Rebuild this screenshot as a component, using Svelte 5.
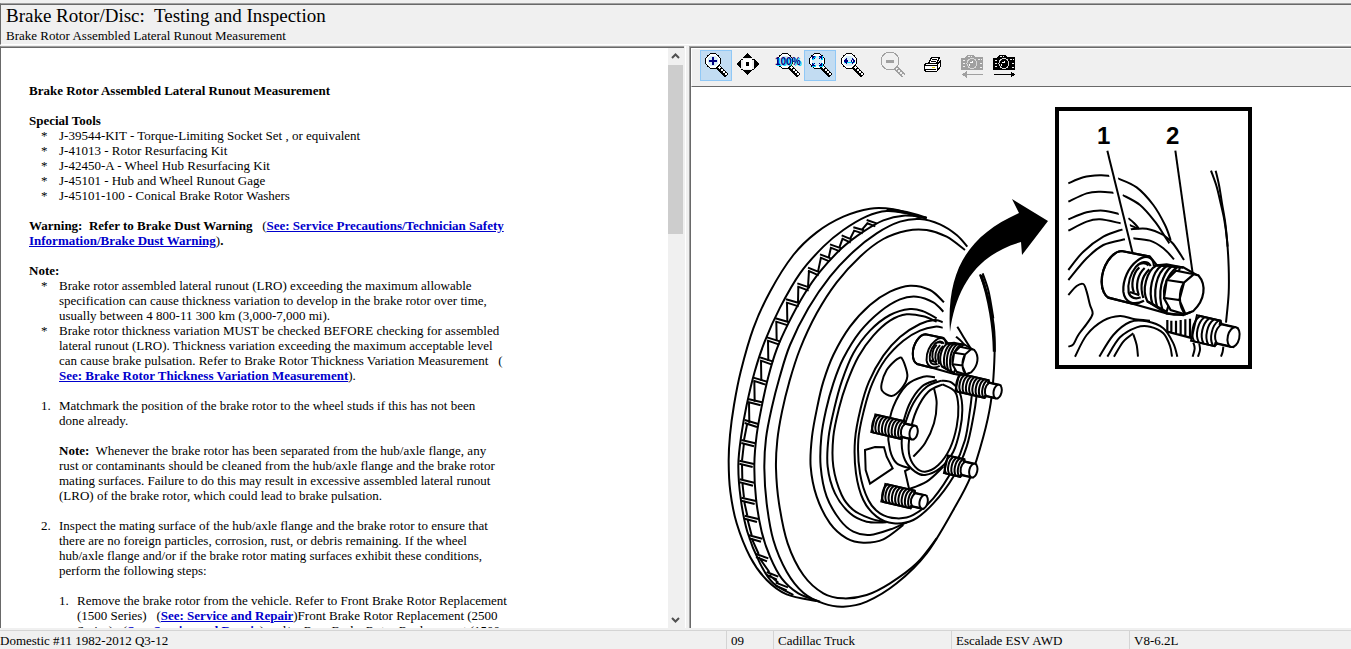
<script>
  let mode = $state('fit');

  const tools = ['J-39544-KIT - Torque-Limiting Socket Set , or equivalent', 'J-41013 - Rotor Resurfacing Kit', 'J-42450-A - Wheel Hub Resurfacing Kit', 'J-45101 - Hub and Wheel Runout Gage', 'J-45101-100 - Conical Brake Rotor Washers'];

  const toolbar = [
    [{ id: 'in', label: 'Zoom in', on: true }, { id: 'pan', label: 'Pan' }],
    [{ id: 'full', label: 'Actual size' }, { id: 'fit', label: 'Fit in window' }, { id: 'width', label: 'Fit width' }],
    [{ id: 'out', label: 'Zoom out', off: true }],
    [{ id: 'print', label: 'Print' }],
    [{ id: 'prev', label: 'Previous image', off: true }, { id: 'next', label: 'Next image' }]
  ];

  // smooth line through a flat list of x y pairs
  const curve = (str) => {
    const n = str.trim().split(/[\s,]+/).map(Number);
    const p = [];
    for (let i = 0; i < n.length; i += 2) p.push([n[i], n[i + 1]]);
    let d = `M${p[0]}`;
    for (let i = 0; i < p.length - 1; i++) {
      const a = p[i - 1] || p[i], b = p[i], c = p[i + 1], e = p[i + 2] || c;
      d += `C${b[0] + (c[0] - a[0]) / 6},${b[1] + (c[1] - a[1]) / 6} ${c[0] - (e[0] - b[0]) / 6},${c[1] - (e[1] - b[1]) / 6} ${c}`;
    }
    return d;
  };

  const disc = [
    // rim edges
    '600,65 520,43 450,41 370,65 290,112 220,180 150,290 100,400 62,530 42,630 30,720 26,800 31,890 50,985 90,1085 140,1155 200,1198 290,1218',
    '600,68 560,55 500,48 440,64 370,105 310,155 240,235 180,338 134,440 104,530 80,630 64,720 55,810 62,910 82,1010 120,1105 160,1165 220,1200',
    '620,68 550,62 490,76 430,110 365,160 300,230 250,302 205,385 170,463 145,545 125,635 110,720 103,810 108,910 125,1010 150,1085 185,1150 235,1195 300,1220',
    '742,155 710,120 660,88 600,72 540,80 470,115 400,170 330,245 265,340 210,450 178,550 155,640 138,730 133,820 140,925 160,1035 200,1130 250,1193 310,1225 370,1235 440,1220 530,1165 620,1075 700,945 752,845 790,725 812,625 822,520 823,410 808,320 780,238',
    '735,165 680,125 620,105 560,107 490,132 420,185 350,262 290,355 240,462 208,560 186,650 172,735 168,820 177,925 203,1045 250,1140 310,1195 370,1210 440,1200 510,1165 590,1105 650,1030',
    '788,235 806,290 820,370',
    // hat steps
    '672,322 630,285 570,272 510,290 450,330 390,395 340,480 310,560 292,635 276,725 272,815 290,905 330,985 380,1030 430,1043 490,1033 550,990',
    '670,350 640,322 590,305 540,313 480,350 420,410 370,490 340,565 318,645 304,725 302,815 320,905 360,975 400,1010 450,1020 520,1000 560,982',
    '650,370 610,349 570,342 510,360 450,407 400,475 365,560 343,640 326,725 323,815 345,895 390,955 440,980 500,982',
    '650,380 610,364 560,358 510,377 460,422 415,485 380,565 357,640 340,725 340,815 365,900 400,945 450,970 490,980',
    // flange
    '668,382 645,375 600,387 540,426 490,482 447,560 422,640 405,735 408,835 430,915 470,965 520,985 580,975 640,925 700,845 740,755 762,655 770,600',
    '668,398 645,395 600,407 550,437 497,492 457,565 432,645 415,735 420,835 445,915 480,955 530,970 580,960 640,910 700,820 735,735 750,645 756,595',
    '712,395 730,425 752,460',
    '708,425 725,440 740,458',
    // centre bore
    '645,547 610,545 560,570 520,635 505,705 510,765 530,805 570,820',
    '665,557 620,575 580,625 553,695 545,745 555,795 585,830 615,840 660,820 700,770 720,705 727,645 720,595 695,563 665,557',
    '650,555 605,575 567,630 542,710',
    '668,568 625,590 590,645 570,715 567,775 585,815 615,830 655,810 690,760 710,695 715,635 705,590 668,568',
    '642,580 650,625 642,685 615,745 580,785',
    // windows
    '543,486 553,505 562,545 545,580 515,603 487,588 485,565 500,525 525,497 543,486',
    '560,885 620,860 670,815'
  ];

  const fins = [
    [440, 75, 470, 85], [400, 97, 432, 106], [365, 121, 396, 134], [330, 148, 364, 160], [300, 178, 332, 190],
    [264, 218, 300, 232], [232, 265, 270, 278], [198, 313, 240, 325], [166, 370, 208, 382], [141, 427, 182, 440],
    [120, 487, 160, 500], [100, 548, 141, 560], [84, 612, 126, 622], [74, 675, 115, 687], [64, 735, 106, 745],
    [58, 797, 102, 807], [59, 853, 103, 863], [64, 908, 108, 918], [74, 962, 115, 972], [87, 1021, 127, 1031],
    [108, 1077, 145, 1090], [140, 1131, 175, 1145], [167, 1163, 204, 1177]
  ];

  const finPath = (f, i) => {
    const [x, y, r, s] = f;
    const next = fins[i + 1];
    let d = `M${x} ${y}L${r} ${s}M${x} ${y + 9}L${r - 4} ${s + 9}`;
    if (next) d += i < 13 ? `M${x + 3} ${y + 9}L${Math.min(next[2] - 6, x + 4)} ${next[3] - 2}` : `M${x + 8} ${y + 9}L${next[0] + 8} ${next[1]}`;
    return d;
  };

  const inset = [
    '55,250 100,232 150,226 180,228',
    '203,235 260,262 310,315 345,375 362,420',
    '55,305 110,280 150,275 192,278',
    '218,285 270,315 315,365 345,410 358,430',
    '55,358 110,337 160,332 208,342',
    '55,392 110,365 150,358 212,370',
    '235,355 250,367 265,385 238,375',
    '240,388 290,386 340,405 370,432 402,480',
    '55,510 100,455 160,410 218,388',
    '55,540 110,475 160,435 225,418',
    '250,415 300,422 340,445 372,478',
    '55,585 80,558 100,552 110,575 120,615 128,640 115,665 85,705 70,733 55,740',
    '75,770 110,705 160,662 210,648 255,658 300,662',
    '148,770 190,705 240,666 290,664 340,685 370,730 382,770',
    '172,770 210,712 260,682 300,680 340,700 360,738 366,770',
    '192,770 220,725 250,700',
    '250,703 260,735 264,770',
    '483,212 500,260 512,310 523,360 531,420 536,500 536,580 528,668',
    '497,212 507,255 516,310 526,370 533,440',
    '430,728 434,745 428,770',
    '448,732 450,750 444,770',
    '520,740 518,755 513,770'
  ];
</script>

<svelte:head>
  <title>Brake Rotor/Disc: Testing and Inspection</title>
</svelte:head>

{#snippet stud(x, y, scale, count)}
  <g transform="translate({x} {y}) rotate(13) scale({scale})">
    <path class="white" d="M0 -27H{count * 10}V-20H{count * 10 + 38}V20H{count * 10}V27H0Z" stroke="none" />
    {#each Array(count) as _, i}
      <path d="M{i * 10 + 6} -26C{i * 10 - 5} -14 {i * 10 - 5} 14 {i * 10 + 6} 26" />
    {/each}
    <path d="M4 -27H{count * 10}L{count * 10 + 4} -21H{count * 10 + 34}M4 27H{count * 10}L{count * 10 + 4} 21H{count * 10 + 34}M{count * 10 + 4} -21C{count * 10 - 7} -8 {count * 10 - 7} 10 {count * 10 + 4} 21" />
    <ellipse class="white" cx={count * 10 + 34} cy="0" rx="12" ry="21" />
  </g>
{/snippet}

{#snippet bolt()}
  <path class="white" d="M300 80L215 63C185 65 155 110 155 155C155 180 165 198 175 203L250 222L350 250L400 255L455 180L440 135L400 112L320 105Z" stroke="none" />
  <path d="M300 80L215 63C185 65 155 110 155 155C155 180 165 198 175 203L250 222" />
  <path d="M312 108C310 78 285 73 262 92C235 112 218 150 220 185C224 216 250 229 282 212" />
  <path d="M302 108C292 90 272 95 258 110C242 130 232 160 236 188C241 205 258 208 272 202M240 186L268 196M262 105C275 98 288 99 296 106" />
  <path d="M268 112C248 130 242 165 252 188M284 114C262 134 256 168 266 194M298 118C274 140 270 172 280 204" />
  <path class="white" d="M320 106C290 122 274 180 292 214L350 245L390 112Z" />
  <path d="M335 107C306 126 294 184 308 224M350 108C318 130 308 186 322 233M366 108C334 132 322 190 338 242M382 111C350 134 336 180 345 203M320 106L350 103L400 113" />
  <path class="white" d="M350 150L378 122L428 132L445 136C470 165 465 210 430 243L405 253L362 240L342 205Z" />
  <path d="M350 150L402 158L430 134M402 158L388 210L344 204M388 210L406 252L425 245M292 214L350 250L372 254L405 253M402 158C385 185 385 230 406 252" />
{/snippet}

{#snippet glass()}
  <path d="M18 17l9 9" stroke="#000" stroke-width="5" />
  <path d="M19 17l8 8" stroke="#fff" stroke-width="2" stroke-dasharray="2 1" />
  <circle cx="13" cy="11" r="7.500" fill="#fff" stroke="#000" />
  <circle cx="13" cy="11" r="5.500" fill="#d4ecf8" />
{/snippet}

{#snippet camera(color)}
  <path d="M5 8h4l2-3h6l2 2h8v13H5z" fill={color} stroke="none" />
  <path d="M12 6h4M7 10h2M7 13h2M7 16h2M22 9h4M24 13h2M24 17h2" stroke="#f0f0f0" stroke-dasharray="2 1" />
  <circle cx="16" cy="13.500" r="5" stroke="#d8d8d8" />
  <path d="M14 12h2v-1M13 14v2" stroke="#fff" />
{/snippet}

{#snippet icon(id)}
  <svg class="icon" viewBox="0 0 32 31" fill="none" aria-hidden="true">
    {#if id === 'in'}
      {@render glass()}
      <path d="M9 11h8M13 7v8" stroke="#000080" stroke-width="2" />
    {:else if id === 'pan'}
      <path d="M15.500 3l5 5h-10zM15.500 25l5-5h-10zM4 14l5-5v10zM27 14l-5-5v10z" fill="#000" />
      <path d="M9 9h2M20 9h2M9 19h2M20 19h2" stroke="#000" />
      <rect x="11" y="9" width="9" height="10" fill="#fff" />
      <circle cx="15.500" cy="14" r="2" fill="#000" />
    {:else if id === 'full'}
      {@render glass()}
      <text x="4" y="16" fill="#00e0ff">100%</text>
      <text x="3" y="15" fill="#000080">100%</text>
    {:else if id === 'fit'}
      {@render glass()}
      <path d="M9 10V7h3M15 7h3v3M18 13v3h-3M12 16H9v-3" stroke="#00d8ff" stroke-width="2" />
      <path d="M8.500 9V6.500H11M15 6.500h2.500V9M17.500 13v2.500H15M11 15.500H8.500V13M9 7l2 2M17 7l-2 2M17 15l-2-2M9 15l2-2" stroke="#000080" />
    {:else if id === 'width'}
      {@render glass()}
      <path d="M8 12.500h11" stroke="#00d8ff" />
      <path d="M7 11l4-3v6zM20 11l-4-3v6zM10 10h2v2h-2zM15 10h2v2h-2z" fill="#000080" />
    {:else if id === 'out'}
      <path d="M19 17l9 9" stroke="#a0a0a0" stroke-width="5" />
      <path d="M20 18l8 8" stroke="#f0f0f0" stroke-width="2" stroke-dasharray="2 1" />
      <circle cx="14" cy="11" r="9" fill="#f0f0f0" stroke="#a0a0a0" />
      <path d="M10 11h8" stroke="#a0a0a0" stroke-width="3" />
    {:else if id === 'print'}
      <path d="M12.500 13.500l3-6h8l-3 6M9.500 13.500h12l3-3v6l-4 5h-11l-1-2v-4z" fill="#fff" stroke="#000" />
      <path d="M9 15.500h12l3-4M21 15v6M9 19.500h11M16 9.500h5M15 11.500h5" stroke="#000" />
      <path d="M16 17.500h3" stroke="#e8d800" />
    {:else if id === 'prev'}
      {@render camera('#a0a0a0')}
      <path d="M6 24.500h21M10 22l-3 2.500 3 2.500z" stroke="#a0a0a0" fill="#a0a0a0" />
    {:else}
      {@render camera('#000')}
      <path d="M6 24.500h20M23 22l3 2.500-3 2.500z" stroke="#000" fill="#000" />
    {/if}
  </svg>
{/snippet}

<div class="app">
  <header>
    <h1>Brake Rotor/Disc:&nbsp; Testing and Inspection</h1>
    <p>Brake Rotor Assembled Lateral Runout Measurement</p>
  </header>

  <main>
    <section class="text-pane">
      <article>
        <h2>Brake Rotor Assembled Lateral Runout Measurement</h2>

        <h3>Special Tools</h3>
        <ul>
          {#each tools as tool}
            <li>{tool}</li>
          {/each}
        </ul>

        <p class="block"><b>Warning:&nbsp; Refer to Brake Dust Warning</b>&nbsp;&nbsp; (<a href="#precautions">See: Service Precautions/Technician Safety<br />Information/Brake Dust Warning</a>)<b>.</b></p>

        <h3>Note:</h3>
        <ul>
          <li>Brake rotor assembled lateral runout (LRO) exceeding the maximum allowable<br />specification can cause thickness variation to develop in the brake rotor over time,<br />usually between 4 800-11 300 km (3,000-7,000 mi).</li>
          <li>Brake rotor thickness variation MUST be checked BEFORE checking for assembled<br />lateral runout (LRO). Thickness variation exceeding the maximum acceptable level<br />can cause brake pulsation. Refer to Brake Rotor Thickness Variation Measurement&nbsp;&nbsp; (<br /><a href="#thickness">See: Brake Rotor Thickness Variation Measurement</a>).</li>
        </ul>

        <ol>
          <li>
            <p class="block">Matchmark the position of the brake rotor to the wheel studs if this has not been<br />done already.</p>
            <p class="block"><b>Note:</b>&nbsp; Whenever the brake rotor has been separated from the hub/axle flange, any<br />rust or contaminants should be cleaned from the hub/axle flange and the brake rotor<br />mating surfaces. Failure to do this may result in excessive assembled lateral runout<br />(LRO) of the brake rotor, which could lead to brake pulsation.</p>
          </li>
          <li>
            <p class="block">Inspect the mating surface of the hub/axle flange and the brake rotor to ensure that<br />there are no foreign particles, corrosion, rust, or debris remaining. If the wheel<br />hub/axle flange and/or if the brake rotor mating surfaces exhibit these conditions,<br />perform the following steps:</p>
            <ol class="steps">
              <li>Remove the brake rotor from the vehicle. Refer to Front Brake Rotor Replacement<br />(1500 Series)&nbsp;&nbsp; (<a href="#front-1500">See: Service and Repair</a>)Front Brake Rotor Replacement (2500<br />Series)&nbsp;&nbsp; (<a href="#front-2500">See: Service and Repair</a>) and/or Rear Brake Rotor Replacement (1500</li>
            </ol>
          </li>
        </ol>
      </article>
      <div class="scrollbar">
        <button aria-label="Scroll up"><svg viewBox="0 0 15 17"><path d="M4 10l3.500-3.500L11 10" /></svg></button>
        <div class="track"><div class="thumb"></div></div>
        <button aria-label="Scroll down"><svg viewBox="0 0 15 17"><path d="M4 7l3.500 3.500L11 7" /></svg></button>
      </div>
    </section>

    <section class="image-pane">
      <div class="toolbar">
        {#each toolbar as group}
          <div class="group">
            {#each group as t}
              <button class:active={t.on || mode === t.id} disabled={t.off} aria-label={t.label} onclick={() => (mode = t.id)}>{@render icon(t.id)}</button>
            {/each}
          </div>
        {/each}
      </div>
      <div class="canvas">
        <svg class="drawing" viewBox="691 87 660 541" preserveAspectRatio="xMinYMin meet" role="img" aria-label="Brake rotor with conical washers on the wheel studs">
          <g transform="translate(720 195) scale(.33333)">
            {#each disc as line}
              <path d={curve(line)} />
            {/each}
            {#each fins as f, i}
              <path d={finPath(f, i)} />
            {/each}
            <path d="M500 44Q560 48 620 70" class="heavy" />
            <path d="M435 765L465 756L492 757L500 785L518 820L450 866L437 825Z" />
            <path d="M570 820L555 828L568 885" />
            <path d="M783 240C808 310 822 400 823 470" class="heavy" />
            {@render stud(460, 685, 1, 9)}
            {@render stud(678, 808, 1, 5)}
            {@render stud(490, 893, 1, 9)}
            {@render stud(712, 562, 1, 9)}
            <g transform="translate(480 378) scale(.635)">
              {@render bolt()}
            </g>
          </g>

          <path class="solid" d="M950 332C946 268 970 235 1019 213L1012 199L1048 221L1022 255L1021 242C978 254 956 286 950 332Z" />

          <rect class="frame" x="1057" y="109" width="193" height="258" />
          <g transform="translate(1050 100) scale(.33333)">
            {#each inset as line}
              <path d={curve(line)} />
            {/each}
            <path class="halo" d="M172 155L248 460" />
            <path d="M172 152L248 460" />
            <path d="M376 152L428 520" />
            <g class="bold" transform="translate(0 390)">
              <path d="M352 270V305M364 272V311M378 272V315M392 270V318M406 268V322M420 266V325M352 305L440 328" />
              {@render bolt()}
            </g>
            {@render stud(432, 684, 1.45, 5)}
          </g>
          <text x="1097" y="144">1</text>
          <text x="1166" y="144">2</text>
        </svg>
      </div>
    </section>
  </main>

  <footer>
    <span>Domestic #11 1982-2012 Q3-12</span>
    <span>09</span>
    <span>Cadillac Truck</span>
    <span>Escalade ESV AWD</span>
    <span>V8-6.2L</span>
  </footer>
</div>

<style>
  :global(body) {
    background: #f0f0f0;
  }

  .app {
    display: flex;
    flex-direction: column;
    height: 100vh;
    padding-top: 3px;
    box-sizing: border-box;
    overflow: hidden;
    background: #f0f0f0;
    color: #000;
    font: 13px/15px "Liberation Serif", "Times New Roman", serif;
    white-space: nowrap;
  }

  h1, h2, h3, p, ul, ol {
    margin: 0;
    padding: 0;
    font-size: 13px;
  }

  header {
    border-top: 1px solid #a0a0a0;
    border-left: 1px solid #696969;
    border-bottom: 1px solid #fff;
    box-shadow: inset 0 1px #696969;
    padding: 2px 5px 1px;
    margin-bottom: 1px;
  }

  header h1 {
    font-size: 19px;
    font-weight: normal;
    line-height: 20px;
    padding-bottom: 2px;
  }

  main {
    flex: 1;
    min-height: 0;
    display: grid;
    grid-template-columns: 51% 1fr;
  }

  .text-pane {
    display: flex;
    min-width: 0;
    min-height: 0;
    margin-right: 5px;
    background: #fff;
    border-top: 1px solid #a0a0a0;
    border-left: 1px solid #696969;
    box-shadow: inset 0 1px #696969, 1px 0 #f0f0f0, 2px 0 #fff;
  }

  article {
    flex: 1;
    min-width: 0;
    padding: 36px 0 0 28px;
    overflow: hidden;
  }

  h2, ul, .block {
    margin-bottom: 15px;
  }

  ul, ol {
    list-style: none;
  }

  li {
    position: relative;
    margin-left: 12px;
    padding-left: 18px;
  }

  li::before {
    position: absolute;
    left: 0;
  }

  ul li::before {
    content: "*";
  }

  ol {
    counter-reset: step;
  }

  ol li {
    counter-increment: step;
  }

  ol li::before {
    content: counter(step) ".";
  }

  .steps li {
    margin-left: 0;
  }

  a {
    color: #0000cc;
    font-weight: bold;
  }

  .scrollbar {
    width: 16px;
    margin-top: 1px;
    display: flex;
    flex-direction: column;
    background: #f0f0f0;
  }

  .scrollbar button {
    height: 17px;
    padding: 0;
    border: 0;
    background: none;
  }

  .scrollbar svg {
    display: block;
    width: 15px;
    height: 17px;
    fill: none;
    stroke: #505050;
    stroke-width: 2;
  }

  .track {
    flex: 1;
  }

  .thumb {
    height: 31%;
    margin-right: 1px;
    background: #cdcdcd;
  }

  .image-pane {
    display: flex;
    flex-direction: column;
    min-width: 0;
    min-height: 0;
    border-top: 1px solid #a0a0a0;
    border-left: 1px solid #a0a0a0;
    background: #fff;
    box-shadow: inset 1px 1px #696969;
    padding: 1px 0 0 1px;
  }

  .toolbar {
    display: flex;
    gap: 8px;
    padding: 1px 9px 5px 8px;
    background: #f0f0f0;
    border-top: 1px solid #fff;
    border-left: 1px solid #fff;
    border-bottom: 1px solid #696969;
  }

  .group {
    display: flex;
  }

  .toolbar button {
    width: 32px;
    height: 31px;
    padding: 0;
    border: 1px solid transparent;
    background: none;
  }

  .toolbar button.active {
    background: #c2dcf2;
    border-color: #90c8f6;
  }

  .icon {
    display: block;
    width: 32px;
    height: 31px;
    margin: -1px;
    shape-rendering: crispEdges;
  }

  .icon text {
    font: bold 10px "Liberation Sans", Arial, sans-serif;
  }

  .canvas {
    flex: 1;
    min-height: 0;
  }

  .drawing {
    display: block;
    width: 100%;
    height: 100%;
  }

  .drawing path, .drawing ellipse {
    fill: none;
    stroke: #000;
    stroke-width: 2;
    vector-effect: non-scaling-stroke;
  }

  .drawing .white {
    fill: #fff;
  }

  .drawing .heavy, .drawing .bold path {
    stroke-width: 3;
  }

  .drawing .bold path {
    stroke-width: 2.2;
  }

  .drawing .halo {
    stroke: #fff;
    stroke-width: 8;
  }

  .drawing .solid {
    fill: #000;
    stroke: none;
  }

  .frame {
    fill: none;
    stroke: #000;
    stroke-width: 4;
  }

  .drawing text {
    font: bold 24px "Liberation Sans", Arial, sans-serif;
  }

  footer {
    display: grid;
    grid-template-columns: 726fr 47fr 178fr 178fr 222fr;
    margin-top: 2px;
    border-top: 1px solid #d4d4d4;
    height: 18px;
  }

  footer span {
    padding: 2px 0 1px 4px;
    border-left: 1px solid #d4d4d4;
  }

  footer span:first-child {
    padding-left: 0;
    border-left: 0;
  }
</style>
